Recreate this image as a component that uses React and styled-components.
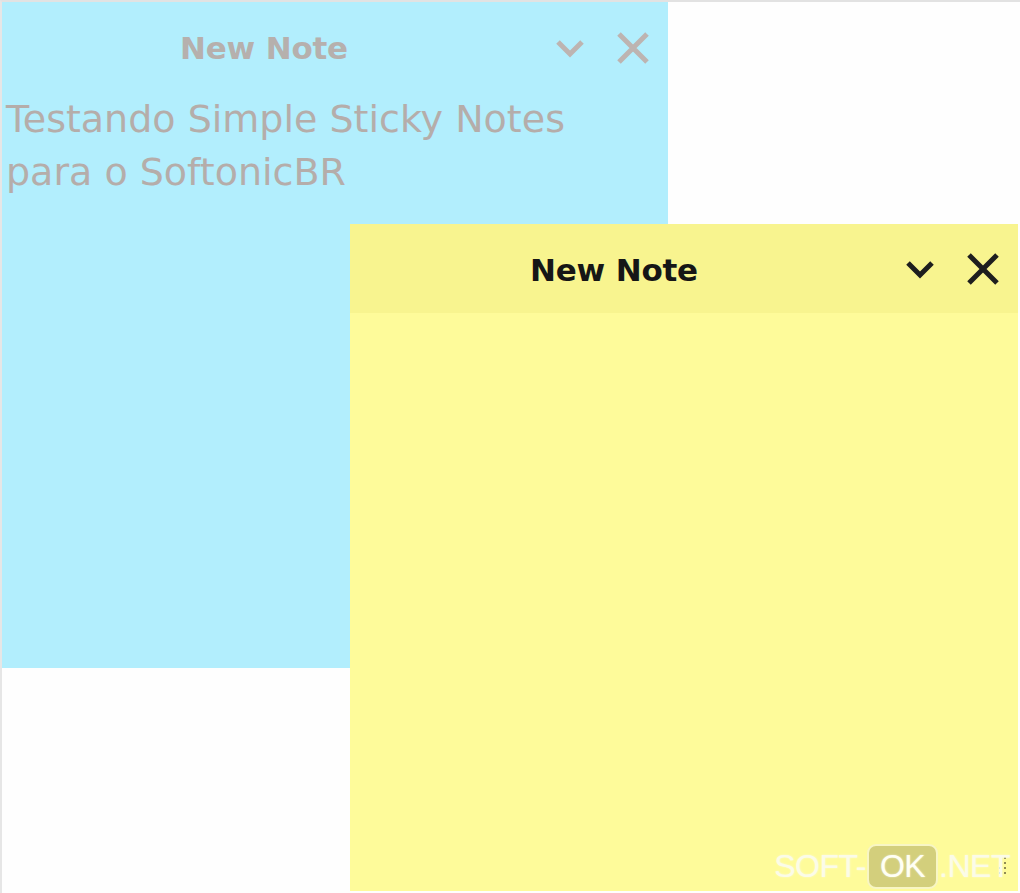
import React from "react";
import styled, { createGlobalStyle } from "styled-components";

const Global = createGlobalStyle`
  html, body { margin: 0; padding: 0; background: #fefefe; }
  body { font-family: "DejaVu Sans", sans-serif; }
`;

const Desktop = styled.div`
  position: relative;
  width: 1020px;
  height: 893px;
  box-sizing: border-box;
  border-top: 2px solid #e2e2e2;
  border-left: 2px solid #e6e6e6;
  overflow: hidden;
  background: #fefefe;
`;

const Note = styled.div`
  position: absolute;
  left: ${(p) => p.$x}px;
  top: ${(p) => p.$y}px;
  width: ${(p) => p.$w}px;
  height: ${(p) => p.$h}px;
  background: ${(p) => p.$bg};
  display: flex;
  flex-direction: column;
`;

const Header = styled.div`
  height: ${(p) => p.$h}px;
  background: ${(p) => p.$bg};
  display: grid;
  grid-template-columns: 1fr auto;
  align-items: center;
  flex-shrink: 0;
`;

const Title = styled.div`
  text-align: center;
  font-family: "DejaVu Sans", sans-serif;
  font-weight: bold;
  font-size: 31px;
  color: ${(p) => p.$color};
  padding-right: 26px;
  letter-spacing: -0.2px;
  margin-top: ${(p) => p.$dy}px;
`;

const Controls = styled.div`
  display: flex;
  align-items: center;
  gap: ${(p) => p.$gap}px;
  padding-right: 18px;
`;

const Body = styled.div`
  flex: 1;
  padding: 0 6px;
  margin-top: -3px;
  font-family: "DejaVu Sans", sans-serif;
  font-size: 38px;
  line-height: 53px;
  color: #b5adaa;
`;

const Watermark = styled.div`
  position: absolute;
  right: 10px;
  bottom: 4px;
  display: flex;
  align-items: center;
  font-family: "Liberation Sans", Arial, sans-serif;
  font-size: 32px;
  letter-spacing: -0.5px;
  color: #fbfbe8;
  text-shadow: 0 0 2px rgba(255,255,255,0.6);
`;

const OkBox = styled.span`
  background: #d3cf7c;
  border: 2px solid #f8f6c4;
  border-radius: 9px;
  padding: 2px 11px;
  margin: 0 1px;
  color: #fffff4;
`;

const Grip = styled.div`
  position: absolute;
  right: 10px;
  bottom: 12px;
  width: 12px;
  height: 22px;
`;

function Chevron({ color, w }) {
  return (
    <svg width="32" height="22" viewBox="0 0 32 22">
      <path d="M4 5 L16 17 L28 5" fill="none" stroke={color} strokeWidth={w} />
    </svg>
  );
}

function Cross({ color, w }) {
  return (
    <svg width="34" height="32" viewBox="0 0 34 32">
      <path d="M3 2 L31 30 M31 2 L3 30" fill="none" stroke={color} strokeWidth={w} />
    </svg>
  );
}

export default function App() {
  return (
    <>
      <Global />
      <Desktop>
        <Note $x={-2} $y={-2} $w={668} $h={668} $bg="#b2eefd">
          <Header $h={96} $bg="#b2eefd">
            <Title $color="#b6b0ad" $dy={0}>New Note</Title>
            <Controls $gap={30}>
              <Chevron color="#bdb4b1" w={5} />
              <Cross color="#bdb4b1" w={5} />
            </Controls>
          </Header>
          <Body>
            Testando Simple Sticky Notes
            <br />
            para o SoftonicBR
          </Body>
        </Note>
        <Note $x={348} $y={222} $w={668} $h={667} $bg="#fefb9a">
          <Header $h={89} $bg="#f8f48f">
            <Title $color="#161616" $dy={2}>New Note</Title>
            <Controls $gap={30}>
              <Chevron color="#1e1e1e" w={5} />
              <Cross color="#1e1e1e" w={5} />
            </Controls>
          </Header>
          <Grip>
            <svg width="12" height="22" viewBox="0 0 12 22">
              <g fill="#8f8b55">
                <rect x="8" y="0" width="2" height="2" />
                <rect x="8" y="5" width="2" height="2" />
                <rect x="8" y="10" width="2" height="2" />
                <rect x="8" y="15" width="2" height="2" />
                <rect x="3" y="10" width="2" height="2" />
                <rect x="3" y="15" width="2" height="2" />
              </g>
            </svg>
          </Grip>
        </Note>
        <Watermark>
          SOFT-<OkBox>OK</OkBox>.NET
        </Watermark>
      </Desktop>
    </>
  );
}
